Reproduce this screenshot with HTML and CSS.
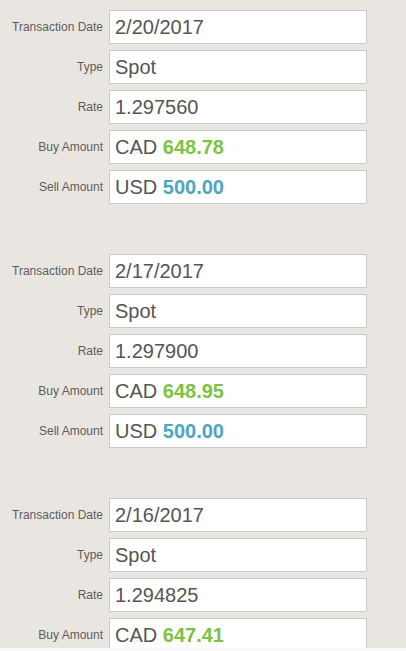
FILE: index.html
```html
<!DOCTYPE html>
<html>
<head>
    <link rel="stylesheet" href="styles.css">
</head>
<body>
    <div class="panel">
        <div class="deal">
            <div class="row"><label>Transaction Date</label><div class="field">2/20/2017</div></div>
            <div class="row"><label>Type</label><div class="field">Spot</div></div>
            <div class="row"><label>Rate</label><div class="field">1.297560</div></div>
            <div class="row"><label>Buy Amount</label><div class="field">CAD <span class="buy">648.78</span></div></div>
            <div class="row"><label>Sell Amount</label><div class="field">USD <span class="sell">500.00</span></div></div>
        </div>

        <div class="deal">
            <div class="row"><label>Transaction Date</label><div class="field">2/17/2017</div></div>
            <div class="row"><label>Type</label><div class="field">Spot</div></div>
            <div class="row"><label>Rate</label><div class="field">1.297900</div></div>
            <div class="row"><label>Buy Amount</label><div class="field">CAD <span class="buy">648.95</span></div></div>
            <div class="row"><label>Sell Amount</label><div class="field">USD <span class="sell">500.00</span></div></div>
        </div>

        <div class="deal">
            <div class="row"><label>Transaction Date</label><div class="field">2/16/2017</div></div>
            <div class="row"><label>Type</label><div class="field">Spot</div></div>
            <div class="row"><label>Rate</label><div class="field">1.294825</div></div>
            <div class="row"><label>Buy Amount</label><div class="field">CAD <span class="buy">647.41</span></div></div>
        </div>
    </div>
</body>
</html>
```

FILE: styles.css
```css
html {
    background-color: #fafafa;
}

body {
    margin: 0;
    font-family: "Liberation Sans", Arial, sans-serif;
}

.panel {
    height: 648px;
    overflow: hidden;
    padding-top: 10px;
    box-sizing: border-box;
    background-color: #e9e6e2;
}

.deal {
    display: flex;
    flex-direction: column;
    gap: 6px;
    margin-bottom: 50px;
}

.row {
    display: flex;
    align-items: center;
}

.row label {
    width: 103px;
    margin-right: 6px;
    text-align: right;
    font-size: 12px;
    color: #5c5c5c;
}

.field {
    width: 258px;
    height: 34px;
    box-sizing: border-box;
    padding: 0 5px;
    border: 1px solid #cdcbc8;
    background-color: #fff;
    font-size: 20px;
    line-height: 32px;
    color: #555;
}

.buy {
    font-weight: bold;
    color: #7cc243;
}

.sell {
    font-weight: bold;
    color: #4ba6c2;
}
```
